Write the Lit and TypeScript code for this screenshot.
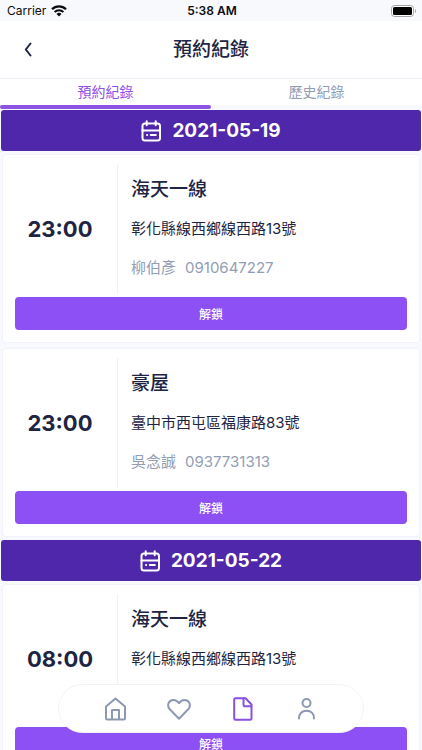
import { LitElement, html, svg, css } from "lit";
import { customElement, property, state } from "lit/decorators.js";
import { classMap } from "lit/directives/class-map.js";

interface Booking {
  time: string;
  place: string;
  address: string;
  guest: string;
  phone: string;
}

interface Day {
  date: string;
  bookings: Booking[];
}

const DAYS: Day[] = [
  {
    date: "2021-05-19",
    bookings: [
      { time: "23:00", place: "海天一線", address: "彰化縣線西鄉線西路13號", guest: "柳伯彥", phone: "0910647227" },
      { time: "23:00", place: "豪屋", address: "臺中市西屯區福康路83號", guest: "吳念誠", phone: "0937731313" },
    ],
  },
  {
    date: "2021-05-22",
    bookings: [
      { time: "08:00", place: "海天一線", address: "彰化縣線西鄉線西路13號", guest: "柳伯彥", phone: "0910647227" },
    ],
  },
];

const NAV = [
  {
    id: "home",
    label: "首頁",
    shape: svg`<path d="M2 9.500 11.500 1.500l9.500 8v12a1 1 0 0 1-1 1H3a1 1 0 0 1-1-1z"/><path d="M8 22V13h7v9"/>`,
  },
  {
    id: "saved",
    label: "收藏",
    shape: svg`<path d="M12 21.700 2.800 12.300C-.5 8.500 1.500 3 6.500 3c2.500 0 4.200 1.300 5.500 3.200C13.300 4.300 15 3 17.500 3c5 0 7 5.500 3.700 9.300z"/>`,
  },
  {
    id: "records",
    label: "紀錄",
    shape: svg`<path d="M4.500 1.200h10l6 6.300v14a1.300 1.300 0 0 1-1.300 1.300H4.500a1.300 1.300 0 0 1-1.300-1.300v-19a1.300 1.300 0 0 1 1.300-1.300z"/><path d="M12.500 1.500v6.500a1.200 1.200 0 0 0 1.200 1.200h6.600"/>`,
  },
  {
    id: "profile",
    label: "我的",
    shape: svg`<circle cx="12.500" cy="6" r="4"/><path d="M5 21.500c0-5 3-7.800 7.500-7.800s7.500 2.800 7.500 7.800"/>`,
  },
];

@customElement("status-bar")
class StatusBar extends LitElement {
  static styles = css`
    :host {
      display: grid;
      grid-template-columns: 1fr auto 1fr;
      align-items: center;
      height: 21px;
      padding: 0 5px 0 7px;
      background: #f8f9fd;
      color: #0c0c0e;
      font-size: 12px;
      line-height: 21px;
    }
    .carrier {
      display: flex;
      align-items: center;
      gap: 5px;
    }
    .clock {
      font-weight: 600;
    }
    .battery {
      justify-self: end;
    }
    svg {
      display: block;
    }
  `;

  render() {
    return html`
      <span class="carrier">
        Carrier
        <svg width="16" height="12" viewBox="0 0 16 12" fill="none" stroke="#0c0c0e" aria-hidden="true">
          <path d="M1 4.300a10 10 0 0 1 14 0" stroke-width="2.200" />
          <path d="M3.600 7a6.300 6.300 0 0 1 8.800 0" stroke-width="2" />
          <path d="M5.500 9 8 11.600 10.500 9a3.600 3.600 0 0 0-5 0z" fill="#0c0c0e" stroke="none" />
        </svg>
      </span>
      <span class="clock">5:38 AM</span>
      <svg class="battery" width="26" height="12" viewBox="0 0 26 12" aria-hidden="true">
        <rect x=".5" y=".5" width="22" height="11" rx="3" fill="#fff" stroke="#a3a3a6" />
        <rect x="2" y="2" width="19" height="8" rx="1.500" fill="#000" />
        <path d="M24 4v4c1.400-.6 1.400-3.400 0-4z" fill="#a3a3a6" />
      </svg>
    `;
  }
}

@customElement("booking-card")
class BookingCard extends LitElement {
  @property({ attribute: false }) booking!: Booking;

  static styles = css`
    .card {
      box-sizing: border-box;
      padding: 9px 12px 12px;
      border: 1px solid #f2f3fa;
      border-radius: 4px;
      background: #fff;
    }
    .summary {
      display: grid;
      grid-template-columns: 103px 1fr;
      height: 130px;
      margin-bottom: 3px;
    }
    .time {
      display: grid;
      place-items: center;
      padding-right: 12px;
      border-right: 1px solid #f0f1f8;
      font-size: 22px;
      font-weight: 700;
      line-height: 28px;
    }
    .details {
      display: flex;
      flex-direction: column;
      gap: 15px;
      padding: 14px 0 0 13px;
    }
    h3,
    p {
      margin: 0;
      line-height: 24px;
      white-space: nowrap;
    }
    h3 {
      font-size: 19px;
      font-weight: 500;
    }
    p {
      font-size: 15px;
    }
    .contact {
      display: flex;
      gap: 9px;
      color: #929db5;
    }
    .unlock {
      display: block;
      width: 100%;
      height: 33px;
      padding: 0;
      border: 0;
      border-radius: 4px;
      background: #8d50f4;
      color: #fff;
      font: inherit;
      font-size: 12px;
      font-weight: 500;
      cursor: pointer;
    }
  `;

  render() {
    const b = this.booking;
    return html`
      <article class="card">
        <div class="summary">
          <time class="time">${b.time}</time>
          <div class="details">
            <h3>${b.place}</h3>
            <p>${b.address}</p>
            <p class="contact"><span>${b.guest}</span><span>${b.phone}</span></p>
          </div>
        </div>
        <button class="unlock" type="button">解鎖</button>
      </article>
    `;
  }
}

@customElement("app-root")
class AppRoot extends LitElement {
  @state() private tab = 0;

  static styles = css`
    :host {
      display: flex;
      flex-direction: column;
      height: 100vh;
      overflow: hidden;
      background: #f8f9fe;
      color: #1d2543;
      font-family: Inter, "Noto Sans CJK TC", sans-serif;
    }
    button {
      padding: 0;
      border: 0;
      background: none;
      color: inherit;
      font: inherit;
      cursor: pointer;
    }
    svg {
      display: block;
    }
    .header {
      display: grid;
      grid-template-columns: 56px 1fr 56px;
      align-items: center;
      flex: none;
      height: 57px;
      border-bottom: 1px solid #eff0f7;
      background: #fff;
    }
    .back {
      display: grid;
      place-items: center;
      height: 100%;
    }
    .header h1 {
      margin: 0;
      font-size: 19px;
      font-weight: 500;
      line-height: 28px;
      text-align: center;
    }
    .tabs {
      display: grid;
      grid-template-columns: 1fr 1fr;
      flex: none;
      height: 30px;
      background: linear-gradient(#fff 26px, #f8f9fe 26px);
    }
    .tab {
      box-sizing: border-box;
      border-bottom: 4px solid transparent;
      color: #929db5;
      font-size: 14px;
      line-height: 26px;
    }
    .tab.active {
      position: relative;
      color: #8d50e8;
    }
    .tab.active::after {
      content: "";
      position: absolute;
      inset: auto 0 -4px;
      height: 4px;
      border-radius: 2px;
      background: #8c54e3;
    }
    .list {
      flex: 1;
      min-height: 0;
      padding-top: 1px;
      overflow-y: auto;
      scrollbar-width: none;
    }
    .date {
      display: flex;
      align-items: center;
      justify-content: center;
      gap: 10px;
      height: 41px;
      margin: 0 1px 3px;
      border-radius: 3px;
      background: #4f27aa;
      color: #fff;
      font-size: 19px;
      font-weight: 700;
      line-height: 24px;
    }
    .cards {
      display: flex;
      flex-direction: column;
      gap: 5px;
      margin: 0 2px 3px;
    }
    .nav {
      position: fixed;
      bottom: 17px;
      left: 58px;
      right: 58px;
      box-sizing: border-box;
      display: grid;
      grid-template-columns: repeat(4, 1fr);
      height: 49px;
      padding: 0 25px;
      border: 1px solid #f3f3f7;
      border-radius: 25px;
      background: #fff;
    }
    .nav button {
      display: grid;
      place-items: center;
      color: #8d98b3;
    }
    .nav button.active {
      color: #8850e0;
    }
  `;

  render() {
    return html`
      <status-bar></status-bar>
      <header class="header">
        <button class="back" type="button" aria-label="返回">
          <svg width="10" height="16" viewBox="0 0 10 16" fill="none" stroke="currentColor" stroke-width="2" stroke-linecap="round" stroke-linejoin="round">
            <path d="M7.500 1.500 2.800 7.500l4.700 6" />
          </svg>
        </button>
        <h1>預約紀錄</h1>
      </header>
      <div class="tabs" role="tablist">
        ${["預約紀錄", "歷史紀錄"].map(
          (name, i) => html`
            <button
              type="button"
              role="tab"
              aria-selected=${this.tab === i}
              class=${classMap({ tab: true, active: this.tab === i })}
              @click=${() => (this.tab = i)}
            >${name}</button>
          `
        )}
      </div>
      <main class="list">
        ${DAYS.map(
          (day) => html`
            <h2 class="date">
              <svg width="21" height="22" viewBox="0 0 21 22" fill="none" stroke="currentColor" stroke-width="2" stroke-linecap="round" aria-hidden="true">
                <rect x="1.500" y="3.500" width="17.500" height="17" rx="2.500" />
                <path d="M5.700 1.200v4M14.700 1.200v4M1.500 10.500H19M6 15h.2M9.800 15h5" />
              </svg>
              <span>${day.date}</span>
            </h2>
            <div class="cards">
              ${day.bookings.map((b) => html`<booking-card .booking=${b}></booking-card>`)}
            </div>
          `
        )}
      </main>
      <nav class="nav">
        ${NAV.map(
          (item) => html`
            <button type="button" aria-label=${item.label} class=${classMap({ active: item.id === "records" })}>
              <svg width="24" height="24" viewBox="0 0 24 24" fill="none" stroke="currentColor" stroke-width="2" stroke-linejoin="round" stroke-linecap="round">
                ${item.shape}
              </svg>
            </button>
          `
        )}
      </nav>
    `;
  }
}
